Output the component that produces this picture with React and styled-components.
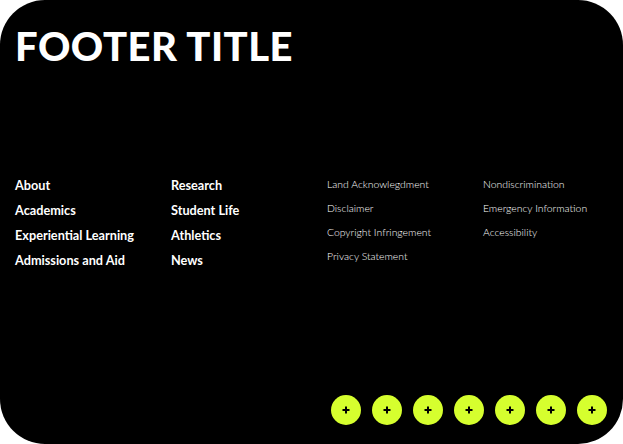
import React from "react";
import styled, { createGlobalStyle } from "styled-components";

const Global = createGlobalStyle`
  html, body {
    margin: 0;
    padding: 0;
    background: #ffffff;
  }
  * { box-sizing: border-box; }
`;

const Footer = styled.footer`
  width: 623px;
  height: 444px;
  background: #000;
  border-radius: 45px;
  padding: 26px 16px 19px 15px;
  display: flex;
  flex-direction: column;
  font-family: Lato, "Liberation Sans", sans-serif;
  color: #fff;
`;

const Title = styled.h1`
  margin: 0;
  font-size: 40px;
  line-height: 1;
  font-weight: 900;
  letter-spacing: 0.5px;
`;

const Nav = styled.nav`
  margin-top: 111px;
  display: grid;
  grid-template-columns: repeat(4, 125px);
  column-gap: 31px;
`;

const LinkList = styled.ul`
  list-style: none;
  margin: 0;
  padding: ${(p) => (p.$light ? "0" : "1px 0 0")};
  display: flex;
  flex-direction: column;
  gap: ${(p) => (p.$light ? "9px" : "10px")};
`;

const Link = styled.a`
  display: block;
  color: #fff;
  text-decoration: none;
  font-size: ${(p) => (p.$light ? "10.4px" : "12.7px")};
  line-height: 15px;
  font-weight: ${(p) => (p.$light ? 300 : 700)};
  white-space: nowrap;
`;

const Socials = styled.div`
  margin-top: auto;
  display: flex;
  justify-content: flex-end;
  gap: 11px;
`;

const Circle = styled.a`
  width: 30px;
  height: 30px;
  border-radius: 50%;
  background: #d6ff2e;
  display: flex;
  align-items: center;
  justify-content: center;
`;

const primary = [
  ["About", "Academics", "Experiential Learning", "Admissions and Aid"],
  ["Research", "Student Life", "Athletics", "News"],
];

const secondary = [
  ["Land Acknowlegdment", "Disclaimer", "Copyright Infringement", "Privacy Statement"],
  ["Nondiscrimination", "Emergency Information", "Accessibility"],
];

const Plus = () => (
  <svg width="8" height="8" viewBox="0 0 8 8">
    <path d="M4 0.5v7M0.5 4h7" stroke="#000" strokeWidth="2" />
  </svg>
);

export default function App() {
  return (
    <>
      <Global />
      <Footer>
        <Title>FOOTER TITLE</Title>
        <Nav>
          {primary.map((col, i) => (
            <LinkList key={"p" + i}>
              {col.map((t) => (
                <li key={t}>
                  <Link href="#">{t}</Link>
                </li>
              ))}
            </LinkList>
          ))}
          {secondary.map((col, i) => (
            <LinkList key={"s" + i} $light>
              {col.map((t) => (
                <li key={t}>
                  <Link href="#" $light>
                    {t}
                  </Link>
                </li>
              ))}
            </LinkList>
          ))}
        </Nav>
        <Socials>
          {Array.from({ length: 7 }).map((_, i) => (
            <Circle key={i} href="#" aria-label={"social " + (i + 1)}>
              <Plus />
            </Circle>
          ))}
        </Socials>
      </Footer>
    </>
  );
}
